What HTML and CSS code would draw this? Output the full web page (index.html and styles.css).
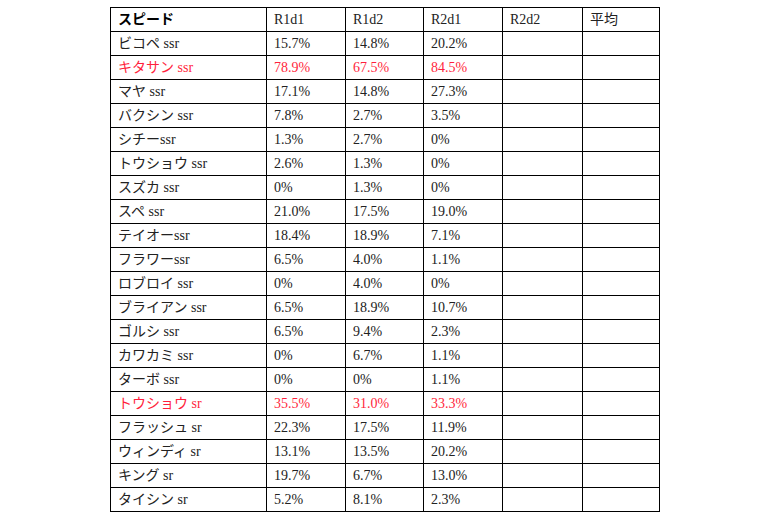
FILE: index.html
```html
<!DOCTYPE html>
<html lang="ja">
<head>
<meta charset="utf-8">
<title>スピード</title>
<link rel="stylesheet" href="styles.css">
</head>
<body>
<div class="page">
<table class="grid">
<colgroup>
<col class="c-name"><col class="c-a"><col class="c-b"><col class="c-c"><col class="c-d"><col class="c-e">
</colgroup>
<thead>
<tr><th class="title">スピード</th><th>R1d1</th><th>R1d2</th><th>R2d1</th><th>R2d2</th><th>平均</th></tr>
</thead>
<tbody>
<tr><td>ビコペ ssr</td><td>15.7%</td><td>14.8%</td><td>20.2%</td><td></td><td></td></tr>
<tr class="hl"><td>キタサン ssr</td><td>78.9%</td><td>67.5%</td><td>84.5%</td><td></td><td></td></tr>
<tr><td>マヤ ssr</td><td>17.1%</td><td>14.8%</td><td>27.3%</td><td></td><td></td></tr>
<tr><td>バクシン ssr</td><td>7.8%</td><td>2.7%</td><td>3.5%</td><td></td><td></td></tr>
<tr><td>シチーssr</td><td>1.3%</td><td>2.7%</td><td>0%</td><td></td><td></td></tr>
<tr><td>トウショウ ssr</td><td>2.6%</td><td>1.3%</td><td>0%</td><td></td><td></td></tr>
<tr><td>スズカ ssr</td><td>0%</td><td>1.3%</td><td>0%</td><td></td><td></td></tr>
<tr><td>スペ ssr</td><td>21.0%</td><td>17.5%</td><td>19.0%</td><td></td><td></td></tr>
<tr><td>テイオーssr</td><td>18.4%</td><td>18.9%</td><td>7.1%</td><td></td><td></td></tr>
<tr><td>フラワーssr</td><td>6.5%</td><td>4.0%</td><td>1.1%</td><td></td><td></td></tr>
<tr><td>ロブロイ ssr</td><td>0%</td><td>4.0%</td><td>0%</td><td></td><td></td></tr>
<tr><td>ブライアン ssr</td><td>6.5%</td><td>18.9%</td><td>10.7%</td><td></td><td></td></tr>
<tr><td>ゴルシ ssr</td><td>6.5%</td><td>9.4%</td><td>2.3%</td><td></td><td></td></tr>
<tr><td>カワカミ ssr</td><td>0%</td><td>6.7%</td><td>1.1%</td><td></td><td></td></tr>
<tr><td>ターボ ssr</td><td>0%</td><td>0%</td><td>1.1%</td><td></td><td></td></tr>
<tr class="hl"><td>トウショウ sr</td><td>35.5%</td><td>31.0%</td><td>33.3%</td><td></td><td></td></tr>
<tr><td>フラッシュ sr</td><td>22.3%</td><td>17.5%</td><td>11.9%</td><td></td><td></td></tr>
<tr><td>ウィンディ sr</td><td>13.1%</td><td>13.5%</td><td>20.2%</td><td></td><td></td></tr>
<tr><td>キング sr</td><td>19.7%</td><td>6.7%</td><td>13.0%</td><td></td><td></td></tr>
<tr><td>タイシン sr</td><td>5.2%</td><td>8.1%</td><td>2.3%</td><td></td><td></td></tr>
</tbody>
</table>
</div>
</body>
</html>
```
FILE: styles.css
```css
html, body {
  margin: 0;
  padding: 0;
  background: #ffffff;
}
.page {
  padding: 7px 0 0 110px;
}
.grid {
  border-collapse: collapse;
  table-layout: fixed;
  width: 550px;
  font-family: "Liberation Serif", "Noto Sans CJK JP", serif;
  font-size: 14px;
  color: #222222;
}
.c-name { width: 156px; }
.c-a { width: 79px; }
.c-b { width: 78px; }
.c-c { width: 79px; }
.c-d { width: 80px; }
.c-e { width: 77px; }
.grid th,
.grid td {
  border: 1px solid #000000;
  height: 23px;
  padding: 0 7px;
  text-align: left;
  vertical-align: middle;
  font-weight: normal;
  white-space: nowrap;
  line-height: 16px;
}
.grid th.title {
  font-weight: bold;
  color: #000000;
}
.grid tr.hl td {
  color: #ff1f3d;
}
```
